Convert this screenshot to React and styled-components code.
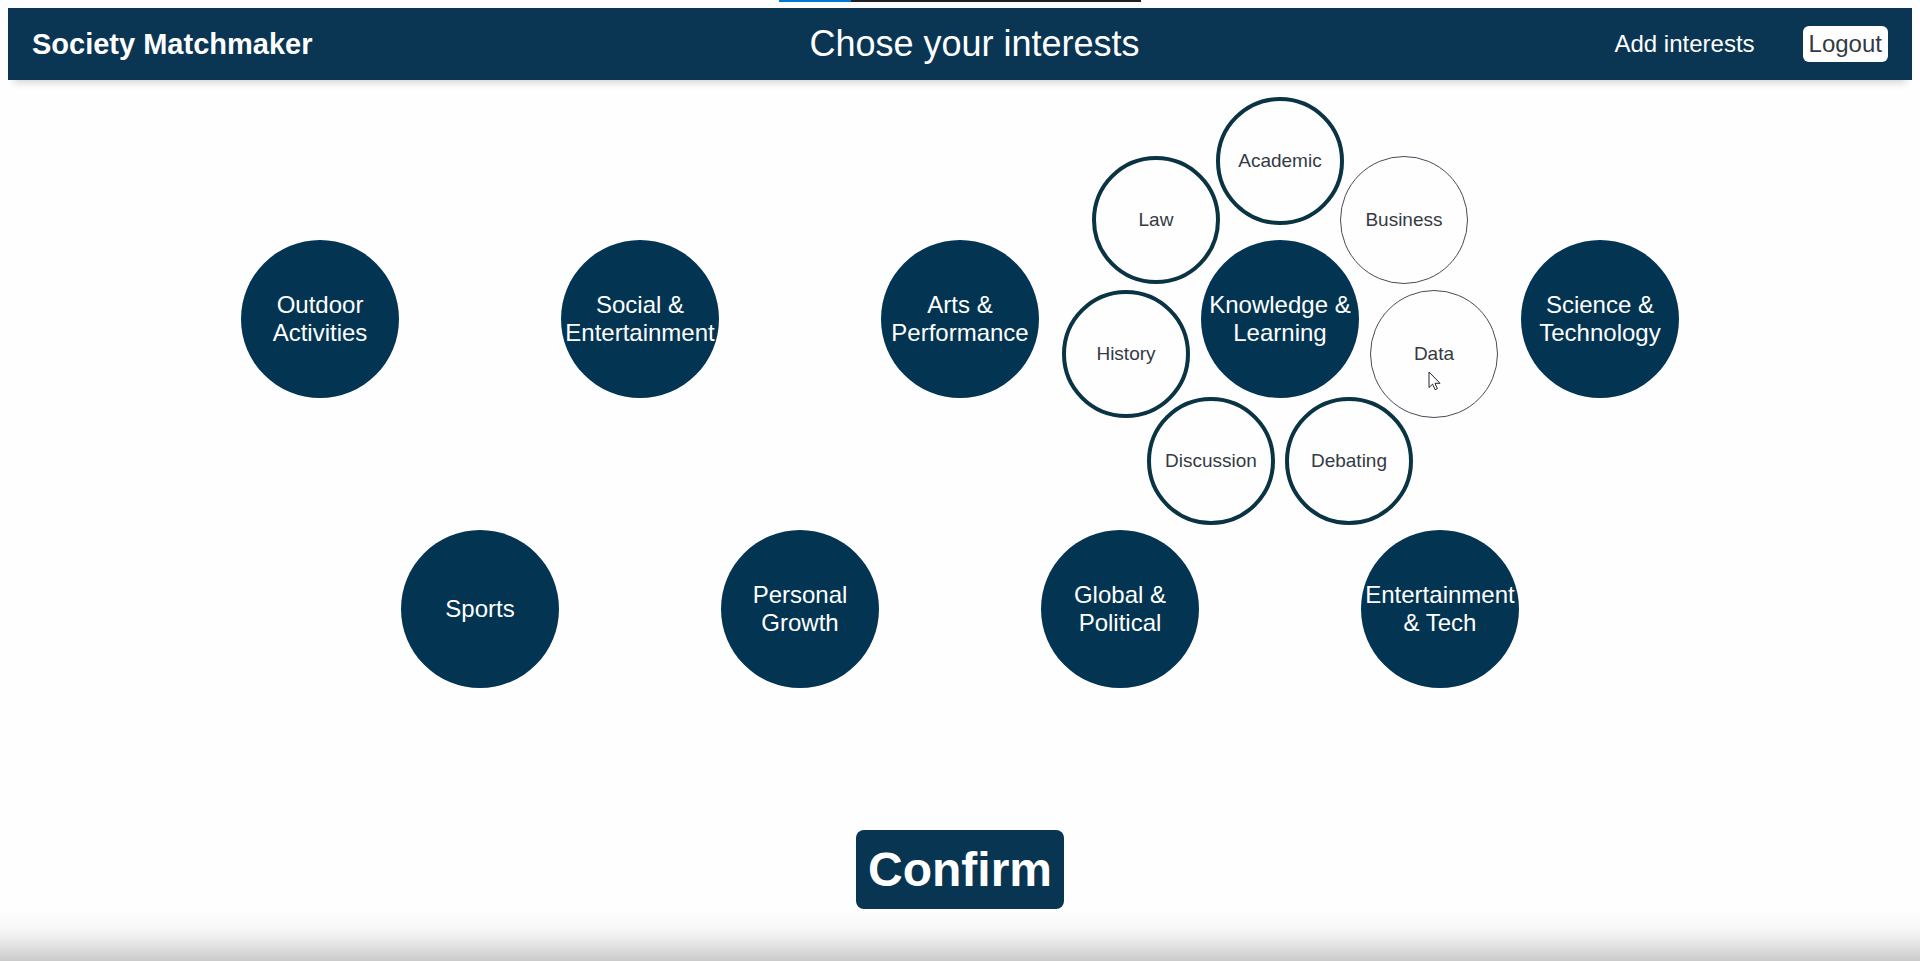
import React, { useState } from "react";
import styled, { createGlobalStyle } from "styled-components";

const GlobalStyle = createGlobalStyle`
  *, *::before, *::after { box-sizing: border-box; }
  body {
    margin: 0;
    background: #fefefe;
    font-family: "Liberation Sans", Arial, sans-serif;
    color: #333a44;
  }
  button { font-family: inherit; cursor: pointer; }
`;

const Page = styled.div`
  min-height: 100vh;
  display: flex;
  flex-direction: column;
  background: linear-gradient(
      to top,
      #cbcbcb 0,
      #dddddd 12px,
      #efefef 24px,
      #f8f8f8 34px,
      #fefefe 52px
    )
    bottom / 100% 52px no-repeat;
`;

const ShareStrip = styled.div`
  display: flex;
  width: 362px;
  height: 2px;
  position: absolute;
  top: 0;
  left: calc(50% - 181px);
  background: #1f1f1f;
`;

const ShareAccent = styled.span`
  width: 72px;
  background: #0078d7;
`;

const Header = styled.header`
  display: flex;
  align-items: center;
  justify-content: space-between;
  height: 72px;
  margin: 8px 8px 0;
  padding: 0 24px;
  background: #0a3653;
  color: #fff;
  box-shadow: 0 8px 8px -6px rgba(0, 0, 0, 0.2);
`;

const Brand = styled.div`
  padding-right: 22px;
  font-size: 29px;
  line-height: 32px;
  font-weight: 700;
`;

const Title = styled.h1`
  margin: 0;
  font-size: 36px;
  line-height: 40px;
  font-weight: 400;
`;

const Nav = styled.nav`
  display: flex;
  align-items: center;
  gap: 48px;
`;

const NavLink = styled.a`
  color: #fff;
  font-size: 24px;
  line-height: 28px;
  text-decoration: none;
`;

const LogoutButton = styled.button`
  padding: 4px 6px;
  border: 0;
  border-radius: 6px;
  background: #fff;
  color: #333a44;
  font-size: 24px;
  line-height: 28px;
`;

const Board = styled.main`
  display: flex;
  flex-direction: column;
  gap: 132px;
  padding-top: 160px;
`;

const Row = styled.div`
  display: flex;
  justify-content: center;
`;

const Cell = styled.div`
  flex: 0 0 calc(100% / 6);
  display: flex;
  justify-content: center;
`;

const Cluster = styled.div`
  position: relative;
  width: 158px;
  height: 158px;
`;

const CategoryButton = styled.button`
  width: 158px;
  height: 158px;
  padding: 0;
  border: 0;
  border-radius: 50%;
  background: #033553;
  color: #fff;
  font-size: 24px;
  line-height: 28px;
`;

const Bubble = styled.button`
  position: absolute;
  width: 128px;
  height: 128px;
  margin: -64px 0 0 -64px;
  padding: 0;
  border: ${(p) => (p.$selected ? "4px solid #0a3344" : "1px solid #4a4a58")};
  border-radius: 50%;
  background: #fefefe;
  color: #333a44;
  font-size: 19px;
  line-height: 22px;
`;

const Pointer = styled.svg`
  position: absolute;
  left: 57px;
  top: 80px;
`;

const Footer = styled.footer`
  display: flex;
  justify-content: center;
  padding: 142px 0 52px;
`;

const ConfirmButton = styled.button`
  padding: 12px;
  border: 0;
  border-radius: 8px;
  background: #083551;
  color: #fff;
  font-size: 48px;
  line-height: 55px;
  font-weight: 700;
`;

const ROWS = [
  [
    ["Outdoor", "Activities"],
    ["Social &", "Entertainment"],
    ["Arts &", "Performance"],
    ["Knowledge &", "Learning"],
    ["Science &", "Technology"],
  ],
  [["Sports"], ["Personal", "Growth"], ["Global &", "Political"], ["Entertainment", "& Tech"]],
];

const TOPICS = {
  "Knowledge & Learning": [
    "Academic",
    "Business",
    "Data",
    "Debating",
    "Discussion",
    "History",
    "Law",
  ],
};

const ORBIT = 158;
const CENTER = 79;

function orbitPosition(index, count) {
  const angle = (index / count) * 2 * Math.PI;
  return {
    left: Math.round(CENTER + ORBIT * Math.sin(angle)),
    top: Math.round(CENTER - ORBIT * Math.cos(angle)),
  };
}

function MousePointer() {
  return (
    <Pointer width="14" height="20" viewBox="0 0 14 20" aria-hidden="true">
      <path
        d="M1 1v15.5l3.6-3.4 2.5 5.6 2.3-1-2.4-5.4h5L1 1z"
        fill="#fff"
        stroke="#23232e"
        strokeWidth="1"
      />
    </Pointer>
  );
}

function Category({ lines, open, selected, onOpen, onToggle }) {
  const name = lines.join(" ");
  const topics = open ? TOPICS[name] || [] : [];
  return (
    <Cell>
      <Cluster>
        <CategoryButton type="button" aria-expanded={open} onClick={() => onOpen(name)}>
          {lines.map((line, i) => (
            <React.Fragment key={line}>
              {i > 0 && <br />}
              {line}
            </React.Fragment>
          ))}
        </CategoryButton>
        {topics.map((topic, i) => (
          <Bubble
            key={topic}
            type="button"
            $selected={selected.includes(topic)}
            aria-pressed={selected.includes(topic)}
            style={orbitPosition(i, topics.length)}
            onClick={() => onToggle(topic)}
          >
            {topic}
            {topic === "Data" && <MousePointer />}
          </Bubble>
        ))}
      </Cluster>
    </Cell>
  );
}

export default function App() {
  const [openName, setOpenName] = useState("Knowledge & Learning");
  const [selected, setSelected] = useState([
    "Academic",
    "Debating",
    "Discussion",
    "History",
    "Law",
  ]);

  const toggle = (topic) =>
    setSelected((list) =>
      list.includes(topic) ? list.filter((t) => t !== topic) : [...list, topic]
    );

  return (
    <>
      <GlobalStyle />
      <Page>
        <ShareStrip>
          <ShareAccent />
        </ShareStrip>
        <Header>
          <Brand>Society Matchmaker</Brand>
          <Title>Chose your interests</Title>
          <Nav>
            <NavLink href="#interests">Add interests</NavLink>
            <LogoutButton type="button">Logout</LogoutButton>
          </Nav>
        </Header>
        <Board id="interests">
          {ROWS.map((row, r) => (
            <Row key={r}>
              {row.map((lines) => (
                <Category
                  key={lines.join(" ")}
                  lines={lines}
                  open={lines.join(" ") === openName}
                  selected={selected}
                  onOpen={setOpenName}
                  onToggle={toggle}
                />
              ))}
            </Row>
          ))}
        </Board>
        <Footer>
          <ConfirmButton type="button">Confirm</ConfirmButton>
        </Footer>
      </Page>
    </>
  );
}
